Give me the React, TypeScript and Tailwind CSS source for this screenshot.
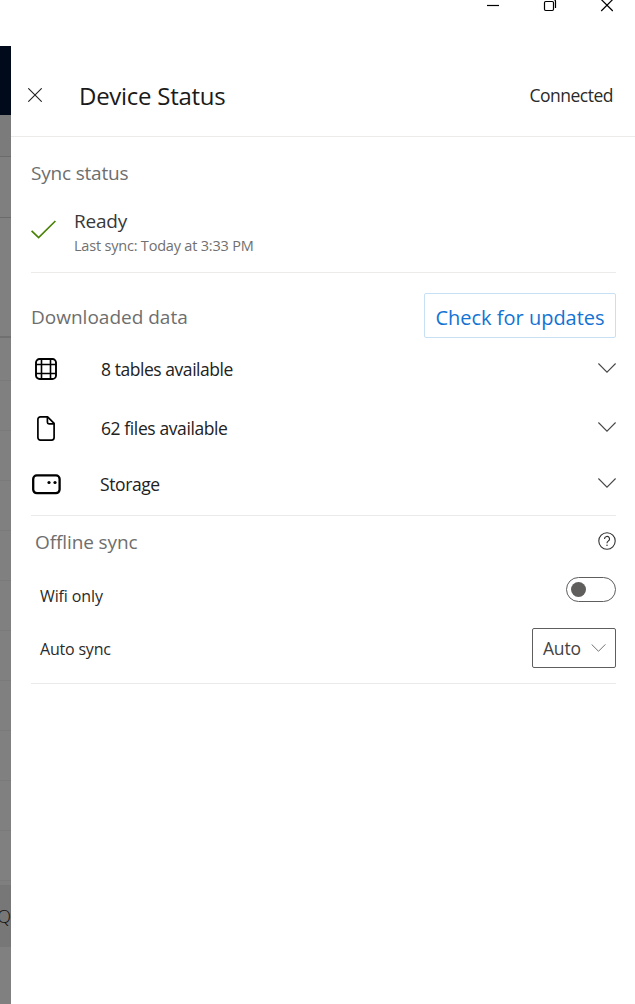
import React from "react";

type IconProps = { className?: string };

const CloseIcon = ({ className }: IconProps) => (
  <svg className={className} width="14" height="14" viewBox="0 0 14 14" fill="none" stroke="currentColor" strokeWidth="1.1">
    <path d="M0.3 0.3 13.7 13.7M13.7 0.3 0.3 13.7" />
  </svg>
);

const Chevron = ({ className }: IconProps) => (
  <svg className={className} viewBox="0 0 18 10" fill="none" stroke="currentColor" strokeWidth="1.1">
    <path d="M0.4 0.5 9 9.1 17.6 0.5" />
  </svg>
);

const CheckIcon = () => (
  <svg width="26" height="20" viewBox="0 0 26 20" fill="none" stroke="#498205" strokeWidth="1.7">
    <path d="M0.6 10.8 7.6 17.6 24.4 1" />
  </svg>
);

const TableIcon = () => (
  <svg width="22" height="22" viewBox="0 0 22 22" fill="none" stroke="#000">
    <rect x="1" y="1" width="20" height="20" rx="3.6" strokeWidth="1.9" />
    <path d="M6.5 1V21M15.5 1V21M1 6.5H21M1 15.5H21" strokeWidth="1.6" />
  </svg>
);

const FileIcon = () => (
  <svg width="18" height="25" viewBox="0 0 18 25" fill="none" stroke="#000" strokeWidth="1.7" strokeLinejoin="round">
    <path d="M3.4 0.9H10.6L17.1 7.4V21.6A2.5 2.5 0 0 1 14.6 24.1H3.4A2.5 2.5 0 0 1 0.9 21.6V3.4A2.5 2.5 0 0 1 3.4 0.9Z" />
    <path d="M10.4 1V6.2A1.6 1.6 0 0 0 12 7.8H17" />
  </svg>
);

const StorageIcon = () => (
  <svg width="29" height="21" viewBox="0 0 29 21" fill="none" stroke="#000">
    <rect x="1.2" y="1.4" width="26.4" height="17.8" rx="3.6" strokeWidth="2.3" />
    <circle cx="17" cy="8.5" r="1.6" fill="#000" stroke="none" />
    <circle cx="23" cy="8.5" r="1.6" fill="#000" stroke="none" />
  </svg>
);

const HelpIcon = () => (
  <svg width="18" height="18" viewBox="0 0 18 18" fill="none" stroke="#323130" strokeWidth="1.1">
    <circle cx="9" cy="9" r="8.2" />
    <path d="M6.5 7A2.5 2.5 0 1 1 10.2 9.1C9.4 9.6 9 10 9 11.2" />
    <circle cx="9" cy="13.3" r="0.75" fill="#323130" stroke="none" />
  </svg>
);

const WindowControls = () => (
  <div className="flex h-[46px] items-start justify-end pr-[22px] text-black">
    <svg width="126" height="14" viewBox="0 0 126 14" fill="none" stroke="currentColor" strokeWidth="1.2">
      <path d="M0 5.5H12" />
      <rect x="57.5" y="1.5" width="9" height="9" rx="1.2" />
      <path d="M60 -0.5H66.5Q68.5 -0.5 68.5 1.5V8" />
      <path d="M114.2 -0.6 125.8 11M125.8 -0.6 114.2 11" />
    </svg>
  </div>
);

const Backdrop = () => (
  <div className="flex w-[11px] shrink-0 flex-col overflow-hidden bg-[#808080]">
    <div className="h-[69px] bg-[#000a1a]" />
    <div className="h-[42px] border-b border-[#6b6b6b] bg-[#7b7b7b]" />
    <div className="h-[61px] border-b border-[#6b6b6b] bg-[#7f7f7f]" />
    <div className="h-[120px] border-b-2 border-[#707070]" />
    {Array.from({ length: 11 }, (_, i) => (
      <div key={i} className={i === 0 ? "h-[43px] border-b border-[#7a7a7a]" : "h-[50px] border-b border-[#7a7a7a]"} />
    ))}
    <div className="h-[4px] bg-[#7f7f7f]" />
    <div className="flex h-[62px] items-center justify-end bg-[#777777] text-[18px] font-light text-[#111]">Q</div>
  </div>
);

type DataRowProps = { icon: React.ReactNode; label: string; rowClass: string; labelClass: string };

const DataRow = ({ icon, label, rowClass, labelClass }: DataRowProps) => (
  <div className={`flex items-center ${rowClass}`}>
    <div className="flex w-[30px] shrink-0 items-center justify-center">{icon}</div>
    <span className={`flex-1 text-[#222] ${labelClass}`}>{label}</span>
    <Chevron className="mb-[2px] h-[10px] w-[18px] text-[#484644]" />
  </div>
);

export default function App() {
  return (
    <div className="flex h-[1004px] w-[635px] flex-col overflow-hidden bg-white font-['Open_Sans','Noto_Sans',sans-serif] whitespace-nowrap">
      <WindowControls />
      <div className="flex min-h-0 flex-1">
        <Backdrop />
        <main className="flex flex-1 flex-col">
          <header className="flex h-[91px] items-center border-b border-[#edebe9] pt-[8px] pr-[22px] pl-[17px]">
            <CloseIcon className="text-[#222]" />
            <h1 className="ml-[37px] flex-1 pt-px text-[24px] leading-8 tracking-[-0.27px] text-[#1a1a1a]">Device Status</h1>
            <span className="text-[17.5px] leading-6 tracking-[-0.5px] text-[#2a2a2a]">Connected</span>
          </header>

          <div className="flex flex-col pr-[19px] pl-[20px]">
            <section className="flex h-[136px] flex-col border-b border-[#edebe9]">
              <h2 className="flex h-[70px] items-center pt-[2px] text-[19px] tracking-[-0.2px] text-[#6e6e6e]">Sync status</h2>
              <div className="flex">
                <div className="mt-[13px] w-[42px]">
                  <CheckIcon />
                </div>
                <div className="flex flex-col pt-px">
                  <span className="pl-px text-[19px] leading-[26px] tracking-[-0.2px] text-[#383838]">Ready</span>
                  <span className="pl-px text-[14.5px] leading-6 tracking-[-0.2px] text-[#707070]">Last sync: Today at 3:33 PM</span>
                </div>
              </div>
            </section>

            <section className="flex h-[243px] flex-col border-b border-[#edebe9] pt-5">
              <div className="mb-[2px] flex h-[45px] items-center justify-between">
                <h2 className="pt-[4px] text-[19px] text-[#6e6e6e]">Downloaded data</h2>
                <button className="flex h-[45px] w-[192px] items-center justify-center rounded-[2px] border border-[#c7e0f4] pt-[4px] text-[20px] text-[#1373d4]">
                  Check for updates
                </button>
              </div>
              <DataRow icon={<TableIcon />} label="8 tables available" rowClass="h-[58px]" labelClass="pl-[40px] text-[17.5px] tracking-[-0.45px]" />
              <DataRow icon={<FileIcon />} label="62 files available" rowClass="h-[60px]" labelClass="pl-[40px] text-[17.5px] tracking-[-0.4px]" />
              <DataRow icon={<StorageIcon />} label="Storage" rowClass="h-[52px]" labelClass="pl-[39px] pt-px text-[17.5px] tracking-[-0.4px]" />
            </section>

            <section className="flex h-[168px] flex-col border-b border-[#edebe9]">
              <div className="flex h-[50px] items-center justify-between pl-1">
                <h2 className="pt-[2px] text-[19px] tracking-[-0.1px] text-[#6e6e6e]">Offline sync</h2>
                <div className="mb-px">
                  <HelpIcon />
                </div>
              </div>
              <div className="flex h-[60px] items-center justify-between pl-[9px]">
                <span className="text-[16px] tracking-[-0.12px] text-[#2a2a2a]">Wifi only</span>
                <div role="switch" aria-checked="false" className="mb-[13px] flex h-[25px] w-[50px] items-center rounded-full border border-[#605e5c] pl-[4px]">
                  <div className="h-[15px] w-[15px] rounded-full bg-[#605e5c]" />
                </div>
              </div>
              <div className="flex h-[45px] items-center justify-between pl-[9px]">
                <span className="pt-px text-[16px] tracking-[-0.2px] text-[#2a2a2a]">Auto sync</span>
                <div className="mb-[1px] flex h-[40px] w-[84px] items-center justify-between rounded-[2px] border border-[#605e5c] pr-[9px] pl-[10px] text-[17.5px] tracking-[-0.2px] text-[#444]">
                  Auto
                  <Chevron className="h-[8px] w-[15px] text-[#605e5c]" />
                </div>
              </div>
            </section>
          </div>
        </main>
      </div>
    </div>
  );
}
